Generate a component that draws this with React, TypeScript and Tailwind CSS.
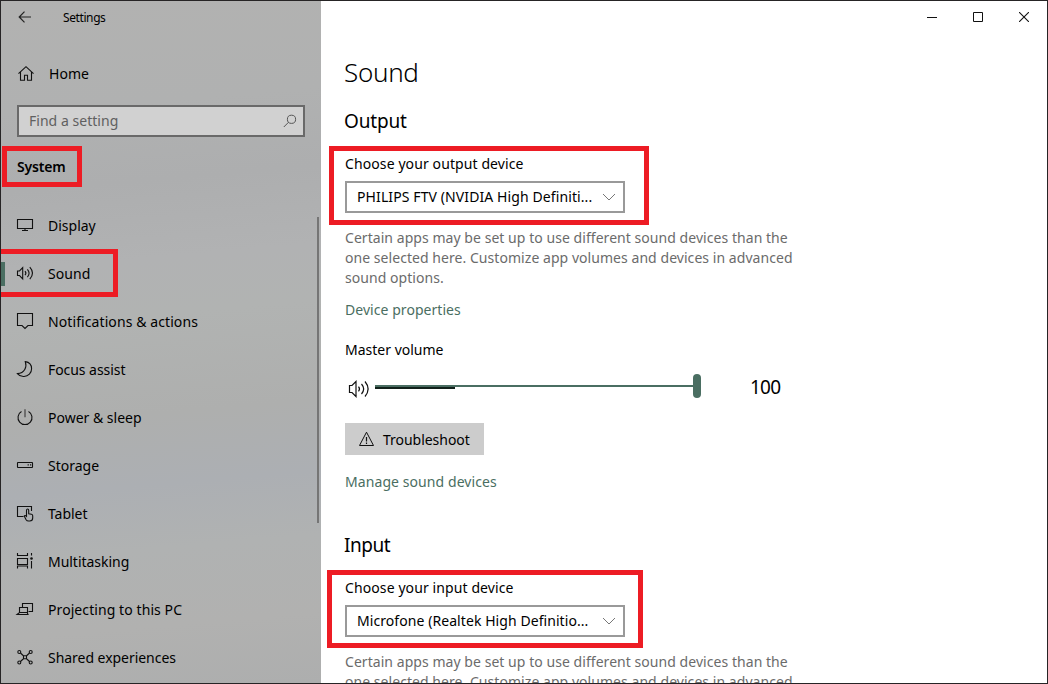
import type { ReactNode } from "react";

function Icon({ children, className = "" }: { children: ReactNode; className?: string }) {
  return (
    <svg
      viewBox="0 0 24 24"
      width="24"
      height="24"
      fill="none"
      stroke="#111"
      strokeWidth="1.1"
      className={`shrink-0 ${className}`}
    >
      {children}
    </svg>
  );
}

const speaker = (
  <>
    <path d="M4.5 9v4.5h2l3.2 3.3V5.7L6.5 9z" />
    <path d="M12 9.2q1.8 2 0 4M14.4 7.3q3.4 3.9 0 7.8M16.8 5.2q5.4 6 0 12" />
  </>
);

const items: { label: string; icon: ReactNode; tracking: string; active?: boolean }[] = [
  { label: "Display", tracking: "tracking-[0px]", icon: <path d="M4.500 5.500h15v9h-15zM12 14.500v2M9 16.500h6" /> },
  { label: "Sound", tracking: "tracking-[0.1px]", icon: speaker, active: true },
  { label: "Notifications & actions", tracking: "tracking-[0.09px]", icon: <path d="M4.500 3.500h15v12H15l-3 3-3-3H4.500z" /> },
  {
    label: "Focus assist",
    tracking: "tracking-[-0.06px]",
    icon: <path d="M12.3 3.6c1.8 5.4-.6 11.4-7.9 12 1.8 2.2 4 3.1 6.6 2.9 4.3-.2 7.6-3.6 7.6-7.8 0-3.7-2.3-6.500-6.300-7.100z" />,
  },
  { label: "Power & sleep", tracking: "tracking-[0px]", icon: (
    <>
      <path d="M8.500 5.500a7 7 0 1 0 7 0" />
      <path d="M12 3.200v8" stroke="#666" strokeWidth="1.800" />
    </>
  ) },
  { label: "Storage", tracking: "tracking-[0px]", icon: (
    <>
      <rect x="4.500" y="8.500" width="15" height="5" rx=".5" />
      <path d="M14.600 10.900h1.200M17 10.900h1.200" />
    </>
  ) },
  { label: "Tablet", tracking: "tracking-[-0.05px]", icon: (
    <>
      <path d="M10.500 14.500h-6v-10h14V9" />
      <path d="M13.500 14.300V8.400q0-1.400 1.100-1.400t1.100 1.400v3.300l2.800.5q1.200.3 1.200 1.600v2.200q0 3-2.900 3h-1.300q-1.600 0-2.400-1.300l-1.900-3.700q.7-1.200 2.300.3z" />
    </>
  ) },
  { label: "Multitasking", tracking: "tracking-[-0.03px]", icon: (
    <>
      <path d="M4.500 3v2.500h10V3M4.500 8.500h10v6h-10zM4.500 18.500v-2.500h10v2.500M18.500 3v2.500M18.500 11v7.500" />
      <circle cx="18.500" cy="8.500" r="1.300" fill="#111" stroke="none" />
    </>
  ) },
  { label: "Projecting to this PC", tracking: "tracking-[0.08px]", icon: (
    <>
      <path d="M9.500 9.500v-4h10v8h-4" />
      <path d="M6.500 9.500h8v5h-8zM4 16.500h11l-.8-2H6.500z" />
    </>
  ) },
  { label: "Shared experiences", tracking: "tracking-[-0.04px]", icon: (
    <>
      <circle cx="6.300" cy="6" r="1.500" />
      <circle cx="17.700" cy="6" r="1.500" />
      <circle cx="6.300" cy="16.500" r="1.500" />
      <circle cx="17.700" cy="16.500" r="1.500" />
      <path d="M7.500 7l3.200 3M16.500 7l-3.200 3M7.500 15.500l3.200-3M16.500 15.500l-3.200-3M10.500 9.800h3v3h-3z" />
    </>
  ) },
];

function DeviceSelect({ label, value, frame, valueTracking }: { label: string; value: string; frame: string; valueTracking: string }) {
  return (
    <div className="relative mt-[19px]">
      <div className="h-5 leading-5 tracking-[0.1px]">{label}</div>
      <div className="mt-[7px] flex h-8 w-[280px] items-center justify-between border-2 border-[#999] pr-[7px] pl-[10px]">
        <span className={`leading-5 whitespace-nowrap ${valueTracking}`}>{value}</span>
        <svg width="14" height="8" viewBox="0 0 14 8" fill="none" stroke="#777" className="shrink-0">
          <path d="M1 1l6 6 6-6" />
        </svg>
      </div>
      <div className={`absolute border-[5px] border-[#ed1c24] ${frame}`} />
    </div>
  );
}

function Description() {
  return (
    <p className="mt-[15px] leading-5 tracking-[0.05px] whitespace-nowrap text-[#6b6b6b]">
      Certain apps may be set up to use different sound devices than the
      <br />
      one selected here. Customize app volumes and devices in advanced
      <br />
      sound options.
    </p>
  );
}

export default function App() {
  return (
    <div className="flex h-[684px] w-[1048px] overflow-hidden border border-[#262425] bg-white font-['Noto_Sans','Open_Sans',sans-serif] text-[14px] text-black">
      <aside className="relative flex w-80 shrink-0 flex-col bg-[linear-gradient(175deg,#b2b2b1_0%,#b0b1b1_16%,#adaeaf_27%,#b1b2b3_38%,#b1b3b2_46%,#aeafae_60%,#acafb3_70%,#b0b2b2_79%,#b1b1b0_90%,#adaeae_100%)]">
        <header className="flex h-8 items-center pl-[17px]">
          <svg width="14" height="12" viewBox="0 0 14 12" fill="none" stroke="#222" strokeWidth="1.200">
            <path d="M1 6h12M6.500 .7L1.200 6l5.300 5.300" />
          </svg>
          <span className="ml-[31px] pt-px text-[12px] tracking-[-0.4px]">Settings</span>
        </header>
        <a className="mt-[29px] flex h-6 items-center pl-[13px]">
          <Icon>
            <path d="M4.500 11.700L12 4.700l7.500 7M6.500 10.200v8h4v-5h3v5h4v-8" />
          </Icon>
          <span className="ml-[11px] leading-6 tracking-[0.05px]">Home</span>
        </a>
        <div className="mt-[19px] ml-4 flex h-8 w-72 shrink-0 items-center justify-between border-2 border-[#696969] bg-[#d1d1d1] pr-[6px] pl-[10px]">
          <span className="leading-5 tracking-[0.03px] text-[#606060]">Find a setting</span>
          <svg width="14" height="14" viewBox="0 0 14 14" fill="none" stroke="#555">
            <circle cx="8.500" cy="5.300" r="4.100" />
            <path d="M5.600 8.200L.8 13" />
          </svg>
        </div>
        <div className="relative mt-[18px] h-6 shrink-0 pl-4">
          <span className="leading-6 font-semibold tracking-[-0.2px]">System</span>
          <div className="absolute top-[-9px] left-px h-[41px] w-20 border-[5px] border-[#ed1c24]" />
        </div>
        <nav className="mt-[23px] flex flex-col">
          {items.map((item) => (
            <a key={item.label} className="relative flex h-12 shrink-0 items-center pl-3">
              {item.active && <div className="absolute top-3 left-0 h-6 w-1 bg-[#4a6e62]" />}
              <Icon>{item.icon}</Icon>
              <span className={`ml-[11px] leading-6 whitespace-nowrap ${item.tracking}`}>{item.label}</span>
              {item.active && (
                <div className="absolute top-[-1px] left-[-1px] h-12 w-[118px] border-y-[5px] border-r-[5px] border-[#ed1c24]" />
              )}
            </a>
          ))}
        </nav>
        <div className="absolute top-[216px] right-[2px] h-[306px] w-0.5 bg-[#757575]" />
      </aside>

      <section className="flex min-w-0 grow flex-col">
        <header className="flex h-8 shrink-0 items-center justify-end">
          <button className="flex h-8 w-[46px] items-center justify-center">
            <svg width="10" height="10" stroke="#111"><path d="M0 5.500h10" /></svg>
          </button>
          <button className="flex h-8 w-[46px] items-center justify-center">
            <svg width="10" height="10" fill="none" stroke="#111"><path d="M.5 .5h9v9h-9z" /></svg>
          </button>
          <button className="flex h-8 w-[46px] items-center justify-center">
            <svg width="10" height="10" stroke="#111" strokeWidth="1.100"><path d="M0 0l10 10M10 0L0 10" /></svg>
          </button>
        </header>
        <main className="flex flex-col items-start pl-6">
          <h1 className="-ml-px mt-[21px] mb-px h-9 text-[26px] leading-9 font-[350] tracking-[-0.3px]">Sound</h1>
          <h2 className="-ml-px mt-4 h-7 text-[19px] leading-7 tracking-[-0.15px]">Output</h2>
          <DeviceSelect
            label="Choose your output device"
            value="PHILIPS FTV (NVIDIA High Definiti..."
            valueTracking="tracking-[0.1px]"
            frame="top-[-8px] left-[-16px] h-[79px] w-80"
          />
          <Description />
          <a className="mt-3 leading-5 tracking-[0.05px] text-[#4a6e62]">Device properties</a>
          <div className="mt-5 leading-5">Master volume</div>
          <div className="mt-[9px] mb-px flex h-9 items-center">
            <svg width="30" height="24" viewBox="0 0 30 24" fill="none" stroke="#111" strokeWidth="1.200" className="mt-1">
              <path d="M4.500 8.500v7H7l4 4v-15l-4 4zM13.500 9.700q2 2.300 0 4.600M16.500 7q4.300 5 0 10M20 4.500q6.200 7.500 0 15" />
            </svg>
            <div className="flex w-[326px] items-center">
              <div className="h-1 w-20 border-t-2 border-[#4a6e62] bg-[#10201a]" />
              <div className="mb-0.5 h-0.5 w-[238px] bg-[#4a6e62]" />
              <div className="mb-0.5 h-6 w-2 rounded-full bg-[#4a6e62]" />
            </div>
            <span className="ml-[49px] text-[19px] leading-7 tracking-[-0.8px]">100</span>
          </div>
          <button className="mt-[17px] flex h-8 w-[139px] items-center bg-[#ccc] pl-[13px]">
            <svg width="17" height="16" viewBox="0 0 17 16" fill="none" stroke="#111">
              <path d="M8.500 1.200L15.500 14.500h-14z" />
              <path d="M8.500 6v4.500M8.500 11.500v1.500" strokeWidth="1.200" />
            </svg>
            <span className="ml-2 pt-0.5 leading-5 tracking-[-0.03px]">Troubleshoot</span>
          </button>
          <a className="mt-[17px] leading-5 tracking-[0.08px] text-[#4a6e62]">Manage sound devices</a>
          <h2 className="-ml-px mt-[39px] h-7 text-[19px] leading-7 tracking-[-0.45px]">Input</h2>
          <DeviceSelect
            label="Choose your input device"
            value="Microfone (Realtek High Definitio..."
            valueTracking="tracking-[0.07px]"
            frame="top-[-8px] left-[-18px] h-[78px] w-[316px]"
          />
          <Description />
        </main>
      </section>
    </div>
  );
}
